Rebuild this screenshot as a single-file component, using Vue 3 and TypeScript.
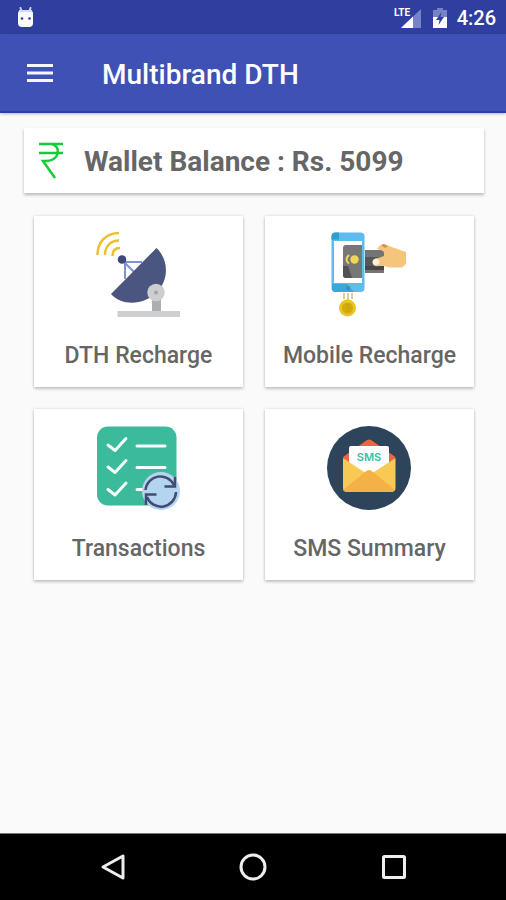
<script setup lang="ts">
import { ref } from 'vue'

type TileIcon = 'dish' | 'mobile' | 'list' | 'sms'

interface Tile {
  icon: TileIcon
  label: string
}

const title = 'Multibrand DTH'
const time = '4:26'
const balance = ref<number>(5099)

const tiles: Tile[] = [
  { icon: 'dish', label: 'DTH Recharge' },
  { icon: 'mobile', label: 'Mobile Recharge' },
  { icon: 'list', label: 'Transactions' },
  { icon: 'sms', label: 'SMS Summary' },
]
</script>

<template>
  <div class="screen">
    <div class="status">
      <svg width="20" height="22" viewBox="0 0 20 22" aria-hidden="true">
        <path d="M4.500 1 6 5M14.500 1 13 5" stroke="#cdd3f5" stroke-width="2" stroke-linecap="round" />
        <path d="M2 6Q2 4 4 4H15Q17 4 17 6V16Q17 20 13 20H6Q2 20 2 16Z" fill="#fafaff" />
        <path d="M3 4H16" stroke="#d5d9f3" stroke-width="2" />
        <circle cx="6" cy="11.500" r="1.300" fill="#303f9f" />
        <circle cx="13.500" cy="11.500" r="1.300" fill="#303f9f" />
      </svg>
      <div class="status-right">
        <svg width="28" height="24" viewBox="0 0 28 24" aria-hidden="true">
          <path d="M28 3V22H8Z" fill="#7783c4" />
          <path d="M20 10.500V22H8Z" fill="#fff" />
          <text class="lte" x="1" y="10">LTE</text>
        </svg>
        <svg width="16" height="24" viewBox="0 0 16 24" aria-hidden="true">
          <path d="M2 4H6V2H12V4H16V12H2Z" fill="#7783c4" />
          <path d="M2 11H16V22H2Z" fill="#fff" />
          <path d="M10.500 6 5 14H8.500L7.500 19 13 11H9.500Z" fill="#303f9f" />
        </svg>
        <span class="time">{{ time }}</span>
      </div>
    </div>

    <header class="toolbar">
      <button class="menu" type="button" aria-label="Open menu">
        <svg width="28" height="22" viewBox="0 0 28 22" aria-hidden="true">
          <path d="M1 3.500H27M1 11H27M1 18.500H27" stroke="#f4f5ff" stroke-width="3" />
        </svg>
      </button>
      <h1>{{ title }}</h1>
    </header>

    <main>
      <section class="wallet">
        <svg width="26" height="38" viewBox="0 0 26 38" aria-hidden="true">
          <path
            d="M1 3H25M1 12H25M13 3C23 4 23 20 7 20H5L17 37"
            fill="none"
            stroke="#12cc38"
            stroke-width="2.500"
          />
        </svg>
        <p>Wallet Balance : Rs. {{ balance }}</p>
      </section>

      <div class="grid">
        <button v-for="tile in tiles" :key="tile.icon" class="tile" type="button">
          <svg v-if="tile.icon === 'dish'" viewBox="-1 0 119 110" aria-hidden="true">
            <g fill="none" stroke="#f0bd2c" stroke-width="2.500">
              <path d="M17.500 35C17.500 22 26 13 39 13" />
              <path d="M25 35C25 27 30 20.500 39 20.500" />
              <path d="M32.500 36C32.500 31 35 28 40 28" />
            </g>
            <g fill="none" stroke="#7b93d4" stroke-width="2">
              <path d="M44 42H62M45 42V59M44 42 54 52" />
            </g>
            <circle cx="42" cy="39.500" r="4.300" fill="#3e4975" />
            <path d="M76.500 28C89 40 89 60 77 72C64 86 41 86 31 74Z" fill="#4a5680" />
            <path d="M72 75H81V92H72Z" fill="#acaeb1" />
            <path d="M37.500 91H100V97H37.500Z" fill="#cecfd0" />
            <circle cx="76" cy="72.500" r="8.700" fill="#cdced0" />
            <circle cx="76" cy="72.500" r="2" fill="#a2a4a9" />
          </svg>

          <svg v-else-if="tile.icon === 'mobile'" viewBox="0 0 119 110" aria-hidden="true">
            <rect x="21.500" y="12.500" width="33" height="59.500" rx="4" fill="#5dbcec" />
            <path d="M25.500 12.500H29V19.500H21.500V16.500Q21.500 12.500 25.500 12.500Z" fill="#2b9fce" />
            <path d="M24 21H52V63H24Z" fill="#fff" />
            <path d="M22 64H37L44 72H26Q22 72 22 68Z" fill="#37a8dc" />
            <circle cx="38" cy="68" r="2" fill="#3d8dab" />
            <path d="M36 25H52V58H36Q33 58 33 55V28Q33 25 36 25Z" fill="#777" />
            <path d="M33 46H38L42 58H36Q33 58 33 55Z" fill="#505153" />
            <path d="M55 30H71Q74 30 74 33V53H55Z" fill="#747475" />
            <path d="M55 37H72V46H55Z" fill="#555658" />
            <path d="M55 46H74V50H55Z" fill="#464749" />
            <path d="M39 35Q34 39.500 39 43.500" fill="none" stroke="#f1d653" stroke-width="2" />
            <circle cx="44.500" cy="39.500" r="4.200" fill="#efd656" />
            <path d="M96 32 76 25C72 23 69 26 67 29L74 31V36L68 38C64 38 62 41 63 44C64 47 67 46 72 46H74L80 47.500H92L96 44Z" fill="#f5c47d" />
            <ellipse cx="66" cy="42" rx="3.500" ry="3" fill="#fff0dd" />
            <path d="M71 25 74 24 78 26 75 28Z" fill="#d49243" />
            <path d="M34 73V79M38 73V82M42 73V79" stroke="#c9b65b" stroke-width="1.300" />
            <circle cx="37.500" cy="88" r="8.500" fill="#e8c520" />
            <circle cx="37.500" cy="88" r="5.500" fill="#d3ab0e" />
            <path d="M36 85H40M36 88H40M36 91H40" stroke="#c39c09" stroke-width="1" />
          </svg>

          <svg v-else-if="tile.icon === 'list'" viewBox="-1 -2 119 110" aria-hidden="true">
            <rect x="17" y="11.500" width="79.500" height="79" rx="11" fill="#3bbb9b" />
            <g fill="none" stroke="#f6fffb" stroke-width="3" stroke-linecap="round" stroke-linejoin="round">
              <path d="M28 30 35 35.500 46 23.500" />
              <path d="M28 52 35 57.500 46 45.500" />
              <path d="M28 74.500 35 80 46 68" />
              <path d="M57 31H85M57 52.500H85M57 74.500H64" />
            </g>
            <circle cx="81" cy="76" r="19" fill="#b3d5ef" />
            <g fill="none" stroke="#414b73" stroke-width="2.500">
              <path d="M65.500 75A15 15 0 0 1 94 70" />
              <path d="M95 62V71.500H84.500" />
              <path d="M96 77A15 15 0 0 1 67 82" />
              <path d="M66 90V79.500H76.500" />
            </g>
          </svg>

          <svg v-else viewBox="0 -2 119 110" aria-hidden="true">
            <circle cx="59" cy="53" r="42" fill="#2d445b" />
            <path d="M33 42 57 25Q59 24 61 25L85.500 42 75 58H42Z" fill="#ef6449" />
            <path d="M41 31H77Q79 31 79 33V52L67 64H51L39 52V33Q39 31 41 31Z" fill="#fff" />
            <path d="M33 43 54 57H64L85.500 43V73Q85.500 77 81 77H37Q33 77 33 73Z" fill="#f8ca54" />
            <path d="M33 75 55 57Q59 53 63 57L85 75Q83 77 81 77H37Q35 77 33 75Z" fill="#f4b246" />
            <text class="sms" x="59" y="46" text-anchor="middle">SMS</text>
          </svg>
          <span>{{ tile.label }}</span>
        </button>
      </div>
    </main>

    <nav class="system-nav">
      <button type="button" aria-label="Back">
        <svg width="30" height="30" viewBox="0 0 30 30" aria-hidden="true">
          <path d="M25 4V26L5 15Z" />
        </svg>
      </button>
      <button type="button" aria-label="Home">
        <svg width="30" height="30" viewBox="0 0 30 30" aria-hidden="true">
          <circle cx="15" cy="15" r="12" />
        </svg>
      </button>
      <button type="button" aria-label="Recent apps">
        <svg width="30" height="30" viewBox="0 0 30 30" aria-hidden="true">
          <rect x="4.500" y="4.500" width="21" height="21" rx="1" />
        </svg>
      </button>
    </nav>
  </div>
</template>

<style>
body {
  margin: 0;
  background: #fafafa;
}
</style>

<style scoped>
.screen {
  min-height: 100vh;
  display: flex;
  flex-direction: column;
  background: #fafafa;
  font-family: Roboto, sans-serif;
  font-weight: 500;
}

svg {
  display: block;
  flex: none;
}

button {
  padding: 0;
  border: 0;
  background: none;
  font: inherit;
  cursor: pointer;
}

.status {
  height: 34px;
  box-sizing: border-box;
  display: flex;
  align-items: center;
  justify-content: space-between;
  padding: 1px 10px 0 16px;
  background: #303f9f;
}

.status-right {
  display: flex;
  align-items: center;
  gap: 10px;
}

.lte {
  font-size: 10px;
  font-weight: 700;
  fill: #fff;
}

.time {
  color: #fff;
  font-size: 20px;
  line-height: 24px;
}

.toolbar {
  height: 77px;
  display: flex;
  align-items: center;
  gap: 48px;
  padding-left: 26px;
  border-bottom: 2px solid #2640a8;
  background: #3f51b5;
  box-shadow: 0 1px 3px #0004;
}

h1 {
  margin: 0;
  padding-top: 4px;
  color: #fff;
  font-size: 28px;
  font-weight: 500;
  line-height: 36px;
}

main {
  flex: 1;
  padding: 15px 22px 24px 24px;
}

.wallet {
  display: flex;
  align-items: center;
  gap: 20px;
  padding: 13px 14px 14px;
  background: #fff;
  box-shadow: 0 2px 3px #0004;
}

.wallet p {
  margin: 0;
  padding-top: 4px;
  color: #666;
  font-size: 28px;
  font-weight: 700;
  line-height: 34px;
}

.grid {
  display: grid;
  grid-template-columns: 1fr 1fr;
  gap: 22px;
  padding: 23px 10px 0;
}

.tile {
  display: flex;
  flex-direction: column;
  align-items: center;
  gap: 12px;
  padding: 4px 0 17px;
  background: #fff;
  box-shadow: 0 2px 3px #0003, 0 0 3px #0002;
  color: #666;
  font-size: 23px;
  font-weight: 500;
  line-height: 28px;
}

.tile svg {
  width: 119px;
  height: 110px;
}

.sms {
  font-family: Inter, sans-serif;
  font-size: 11px;
  font-weight: 600;
  fill: #33c3a4;
}

.system-nav {
  height: 66px;
  display: flex;
  align-items: center;
  justify-content: space-around;
  padding: 0 42px 0 43px;
  border-top: 1px solid #777;
  background: #000;
}

.system-nav svg {
  fill: none;
  stroke: #eee;
  stroke-width: 3;
  stroke-linejoin: round;
}
</style>
